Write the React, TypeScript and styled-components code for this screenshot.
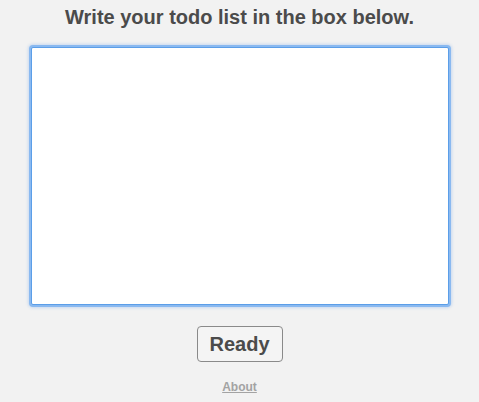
import React from "react";
import styled, { createGlobalStyle } from "styled-components";

const GlobalStyle = createGlobalStyle`
  html, body {
    margin: 0;
    padding: 0;
    background: #f2f2f2;
  }
  body {
    font-family: "Liberation Sans", Arial, sans-serif;
  }
`;

const Page = styled.div`
  width: 479px;
  height: 402px;
  display: flex;
  flex-direction: column;
  align-items: center;
  background: #f2f2f2;
`;

const Title = styled.h1`
  margin: 5px 0 0;
  font-size: 20px;
  font-weight: bold;
  color: #4b4b4b;
  line-height: 24px;
`;

const TodoBox = styled.textarea`
  box-sizing: border-box;
  margin-top: 18px;
  width: 418px;
  height: 258px;
  border: 1px solid #5b9ee8;
  border-radius: 2px;
  box-shadow: 0 0 0 2px #8ab9f0, 0 0 3px 3px rgba(120, 170, 235, 0.35);
  background: #fff;
  resize: none;
  outline: none;
  font-family: "Liberation Sans", Arial, sans-serif;
  font-size: 14px;
`;

const ReadyButton = styled.button`
  margin-top: 21px;
  width: 86px;
  height: 36px;
  border: 1px solid #8a8a8a;
  border-radius: 4px;
  background: #f4f4f4;
  color: #4b4b4b;
  font-family: "Liberation Sans", Arial, sans-serif;
  font-size: 20px;
  font-weight: bold;
  padding: 0;
  cursor: pointer;
`;

const AboutLink = styled.a`
  margin-top: 18px;
  font-size: 12px;
  font-weight: bold;
  color: #a3a3a3;
  text-decoration: underline;
`;

export default function App() {
  return (
    <>
      <GlobalStyle />
      <Page>
        <Title>Write your todo list in the box below.</Title>
        <TodoBox />
        <ReadyButton>Ready</ReadyButton>
        <AboutLink href="#">About</AboutLink>
      </Page>
    </>
  );
}
